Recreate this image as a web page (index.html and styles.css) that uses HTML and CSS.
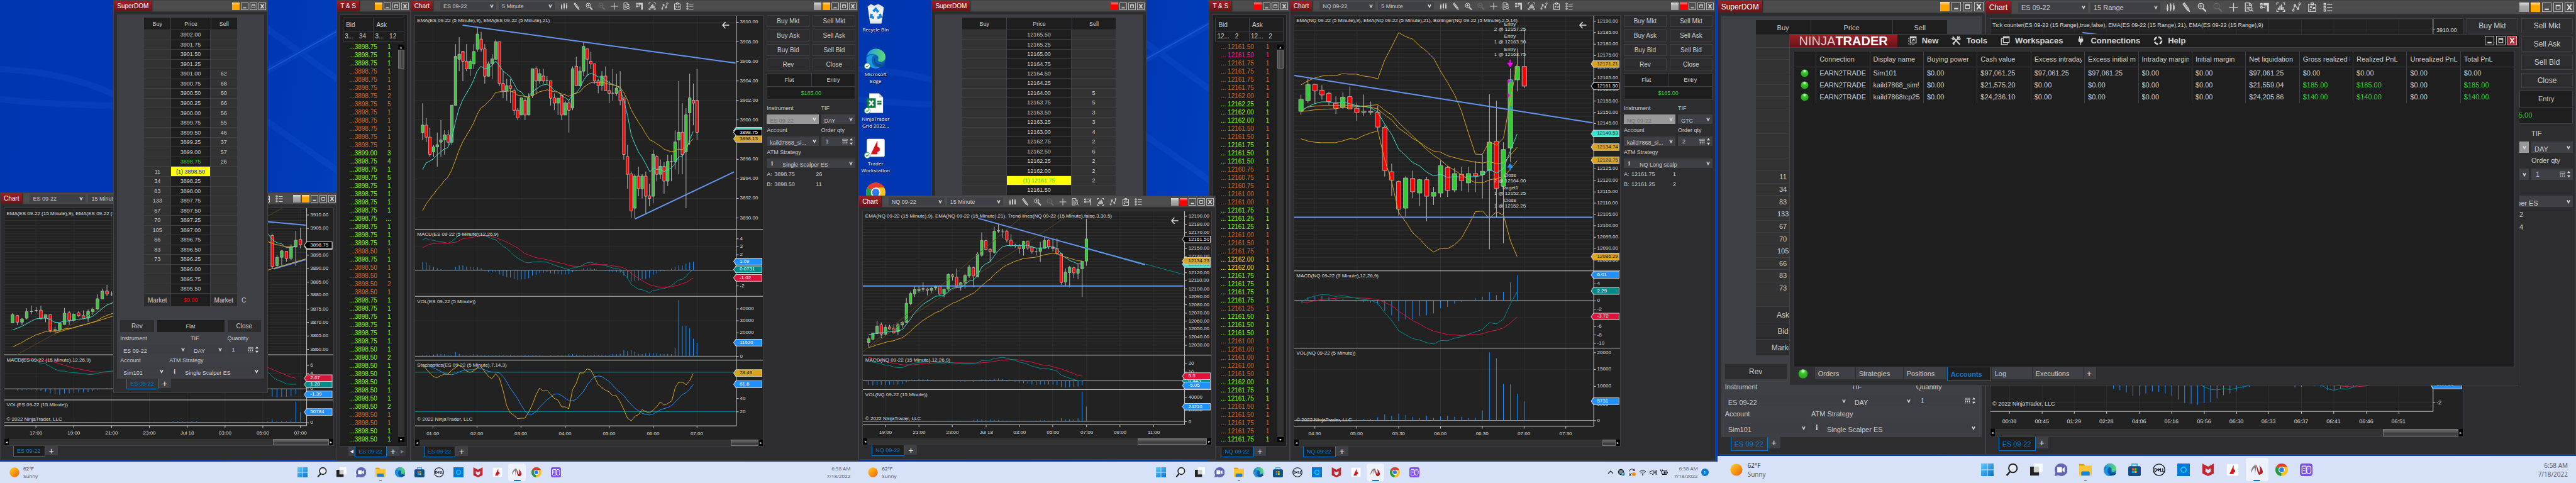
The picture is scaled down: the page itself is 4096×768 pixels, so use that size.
FILE: index.html
```
<!DOCTYPE html>
<html lang="en">
<head>
<meta charset="utf-8">
<title>Trading desktop</title>
<link rel="stylesheet" href="styles.css">
</head>
<body>
<svg class="defs" aria-hidden="true">
  <defs>
    <linearGradient id="g-win" x1="0" y1="0" x2="1" y2="1"><stop offset="0" stop-color="#5ad0fb"/><stop offset="1" stop-color="#0a6fd0"/></linearGradient>
    <linearGradient id="g-sun" x1="0" y1="0" x2="1" y2="1"><stop offset="0" stop-color="#ffd21c"/><stop offset="1" stop-color="#ee5f09"/></linearGradient>
    <linearGradient id="g-edge" x1="0" y1="0" x2="1" y2="0"><stop offset="0" stop-color="#1f9ae4"/><stop offset="1" stop-color="#5fdc6a"/></linearGradient>
    <radialGradient id="g-dot" cx=".5" cy=".2" r=".8"><stop offset="0" stop-color="#e8ffe0"/><stop offset=".35" stop-color="#3fc42f"/><stop offset="1" stop-color="#1da516"/></radialGradient>
  </defs>
  <symbol id="i-candles" viewBox="0 0 24 24"><path d="M4 5v17M12 2v20M20 2v19" stroke="currentColor" stroke-width="2"/><path d="M2 9h4v10H2zM10 5h4v13h-4zM18 7h4v11h-4z" fill="currentColor"/></symbol>
  <symbol id="i-pencil" viewBox="0 0 24 24"><path d="M3 4l4-3 11 15 2 7-6-4z" fill="currentColor" opacity=".55"/><path d="M3 4l4-3 11 15 2 7-6-4zM6 7l10 12" fill="none" stroke="currentColor" stroke-width="2"/></symbol>
  <symbol id="i-zoomin" viewBox="0 0 24 24"><g fill="none" stroke="currentColor" stroke-width="2"><circle cx="9" cy="9" r="7"/><path d="M9 5v8M5 9h8"/><path d="M14 15l8 8" stroke-width="4"/></g></symbol>
  <symbol id="i-zoomout" viewBox="0 0 24 24"><g fill="none" stroke="currentColor" stroke-width="2"><circle cx="9" cy="9" r="7"/><path d="M5 9h8"/><path d="M14 15l8 8" stroke-width="4"/></g></symbol>
  <symbol id="i-plus" viewBox="0 0 24 24"><path d="M12 1v22M1 12h22" stroke="currentColor" stroke-width="2"/></symbol>
  <symbol id="i-doc" viewBox="0 0 24 24"><g fill="none" stroke="currentColor" stroke-width="2"><path d="M11 22H2V1h11l5 5v5M12 1v6h6M5 8h4M5 12h6M5 16h5"/><circle cx="15" cy="16" r="4"/><path d="M18 19l4 4"/></g></symbol>
  <symbol id="i-panel" viewBox="0 0 24 24"><path d="M8 1h14v22h-5V7H8z" fill="currentColor"/><path d="M1 2h4v4H1zM1 10h4v4H1zM5 12h7V7" fill="none" stroke="currentColor" stroke-width="2"/></symbol>
  <symbol id="i-panel-line" viewBox="0 0 24 24"><path d="M1 2h4v4H1zM1 10h4v4H1zM5 3h17M5 12h17M20 1v22M16 7h6" fill="none" stroke="currentColor" stroke-width="2"/></symbol>
  <symbol id="i-bars" viewBox="0 0 24 24"><path d="M7 1H2v5M17 1h5v5M2 18v5h5M22 18v5h-5" fill="none" stroke="currentColor" stroke-width="2"/><path d="M6 19v-6M10 19V8M14 19V5M18 19v-8" stroke="currentColor" stroke-width="3"/></symbol>
  <symbol id="i-path" viewBox="0 0 24 24"><g fill="none" stroke="currentColor" stroke-width="2"><path d="M4 19L8 7l8 9 4-12"/><circle cx="4" cy="20" r="2"/><circle cx="8" cy="7" r="2"/><circle cx="16" cy="16" r="2"/><circle cx="20" cy="3" r="2"/></g></symbol>
  <symbol id="i-clip" viewBox="0 0 24 24"><path d="M3 4h18v19H3zM9 1h6v5H9zM7 10l4 4m0-4l-4 4M13 17l5-5m-4 0h4v4M7 20v-3h3" fill="none" stroke="currentColor" stroke-width="2"/></symbol>
  <symbol id="i-list" viewBox="0 0 24 24"><path d="M2 2h4v4H2zM2 10h4v4H2zM2 18h4v4H2zM10 5h13M10 12h13M10 21h13" fill="none" stroke="currentColor" stroke-width="2"/></symbol>
  <symbol id="i-min" viewBox="0 0 12 12"><path d="M3 9h6" stroke="#ddd" stroke-width="2"/></symbol>
  <symbol id="i-max" viewBox="0 0 12 12"><path d="M3 3h6v6H3zM3 4h6" fill="none" stroke="#ddd" stroke-width="1"/></symbol>
  <symbol id="i-close" viewBox="0 0 12 12"><path d="M3 2l6 8M9 2L3 10" stroke="#ddd" stroke-width="2"/></symbol>
  <symbol id="i-calc" viewBox="0 0 12 12"><path d="M1 1h10v3H1z" fill="none" stroke="#ccc" stroke-width="1"/><path d="M1 6h2M5 6h2M9 6h2M1 8h2M5 8h2M9 8h2M1 11h2M5 11h2M9 11h2" stroke="#ccc" stroke-width="1.4"/></symbol>
  <symbol id="i-spin" viewBox="0 0 8 14"><path d="M1 5l3-4 3 4zM1 9l3 4 3-4z" fill="#ddd"/></symbol>
  <symbol id="i-arrow" viewBox="0 0 24 24"><path d="M23 12H2M11 2L2 12l9 10" fill="none" stroke="#ddd" stroke-width="3"/></symbol>
  <symbol id="i-dot" viewBox="0 0 12 12"><circle cx="6" cy="6" r="5.5" fill="url(#g-dot)"/></symbol>
  <symbol id="n-new" viewBox="0 0 24 24"><path d="M7 2h15v16H7z" fill="none" stroke="currentColor" stroke-width="2"/><path d="M7 3h15v3H7z" fill="currentColor"/><path d="M3 6v16h14" fill="none" stroke="currentColor" stroke-width="2" stroke-dasharray="2 2"/><path d="M11 14l6-5m-4 0h4v4" fill="none" stroke="currentColor" stroke-width="2"/></symbol>
  <symbol id="n-tools" viewBox="0 0 24 24"><path d="M3 2l18 20M21 2L4 20" stroke="currentColor" stroke-width="3"/><path d="M1 5a4 4 0 0 0 6 3M17 1a5 5 0 0 0 0 7 5 5 0 0 0 6-1M3 18l4 4" fill="none" stroke="currentColor" stroke-width="3"/></symbol>
  <symbol id="n-work" viewBox="0 0 24 24"><path d="M7 2h15v15H7z" fill="none" stroke="currentColor" stroke-width="2"/><path d="M7 3h15v3H7z" fill="currentColor"/><path d="M6 7H2v15h15v-4" fill="none" stroke="currentColor" stroke-width="2"/></symbol>
  <symbol id="n-plug" viewBox="0 0 24 24"><path d="M9 1v7M15 1v7" stroke="currentColor" stroke-width="2"/><path d="M6 7h12v6l-4 4h-4l-4-4z" fill="currentColor"/><path d="M12 16v7" stroke="currentColor" stroke-width="2"/></symbol>
  <symbol id="n-help" viewBox="0 0 24 24"><circle cx="12" cy="12" r="9" fill="none" stroke="currentColor" stroke-width="4" stroke-dasharray="10 4"/></symbol>

  <symbol id="t-sun" viewBox="0 0 24 24"><circle cx="12" cy="12" r="11.5" fill="url(#g-sun)"/></symbol>
  <symbol id="t-start" viewBox="0 0 24 24"><path d="M0 0h11.4v11.4H0zM12.6 0H24v11.4H12.6zM0 12.6h11.4V24H0zM12.6 12.6H24V24H12.6z" fill="url(#g-win)"/></symbol>
  <symbol id="t-search" viewBox="0 0 24 24"><circle cx="14" cy="9" r="8" fill="#e8edf6" stroke="#222" stroke-width="2.4"/><path d="M9 15l-7 8" stroke="#222" stroke-width="3"/></symbol>
  <symbol id="t-task" viewBox="0 0 24 24"><path d="M0 6h17v17H0z" fill="#222"/><path d="M7 0h17v17H7z" fill="#fff" opacity=".78"/></symbol>
  <symbol id="t-chat" viewBox="0 0 24 24"><path d="M12 0a12 12 0 1 1-5 22.5L0 24l1.5-6.5A12 12 0 0 1 12 0z" fill="#6264b8"/><path d="M5 7h9v10H5zM15 10l4-3v10l-4-3z" fill="#fff"/></symbol>
  <symbol id="t-folder" viewBox="0 0 24 24"><path d="M0 1h9l3 4H0z" fill="#dd9a07"/><path d="M0 4h24v19H0z" fill="#fdc534"/><path d="M4 23v-6q0-2 2-2h12q2 0 2 2v6z" fill="#1683d8"/></symbol>
  <symbol id="t-edge" viewBox="0 0 24 24"><circle cx="12" cy="12" r="12" fill="#0c64b5"/><path d="M1 9C3 3 7 0 12 0c7 0 12 5 12 10 0 4-3 6-6 6-2 0-4-1-3-3 1-3-1-6-5-6-4-1-7 0-9 2z" fill="url(#g-edge)"/><path d="M10 8c-4 3-4 9 0 13 2 2 5 2 8 1-5 4-12 2-15-2-4-5-2-10 0-11 2-2 5-2 7-1z" fill="#1e95e0"/><path d="M12 9c-3 4 0 10 5 10 3 0 5-1 6-2l1 3-6 3c-8-1-10-10-6-14z" fill="#0b4f94"/></symbol>
  <symbol id="t-store" viewBox="0 0 24 24"><path d="M7 6V1h10v5" fill="none" stroke="#28b4ee" stroke-width="2"/><rect y="5" width="24" height="19" rx="3" fill="#124f85"/><path d="M7 9h4v4H7z" fill="#f35325"/><path d="M12 9h4v4h-4z" fill="#81bc06"/><path d="M7 14h4v4H7z" fill="#05a6f0"/><path d="M12 14h4v4h-4z" fill="#ffba08"/></symbol>
  <symbol id="t-dell" viewBox="0 0 24 24"><circle cx="12" cy="12" r="11" fill="none" stroke="#111" stroke-width="1.6"/><path d="M4 9v6h1q3-1 3-3t-3-3zM9 12l3-2.5M9 12l3 2.5M11 12.500l3-2M15 9v6h2M19 9v6h2" fill="none" stroke="#111" stroke-width="1.5"/></symbol>
  <symbol id="t-alexa" viewBox="0 0 24 24"><path d="M0 0h24v24H0z" fill="#0578d6"/><circle cx="12" cy="12" r="5" fill="none" stroke="#10d0ff" stroke-width="2"/></symbol>
  <symbol id="t-mcafee" viewBox="0 0 24 24"><path d="M1 0l11 6 11-6v19l-11 5-11-5zM7 9v7l5 3 5-3V9l-5 3z" fill="#c1272d" fill-rule="evenodd"/></symbol>
  <symbol id="t-ib" viewBox="0 0 24 24"><rect x="1" y="1" width="22" height="22" rx="2" fill="#fff"/><path d="M14 3L6 20h8v-6z" fill="#d5131f"/><circle cx="14" cy="14" r="3" fill="#d5131f"/></symbol>
  <symbol id="t-nt" viewBox="0 0 24 24"><path d="M0 18C1 8 5 3 11 3L8 20C8 14 8 10 7 8 4 10 3 14 0 18z" fill="#8a8078"/><path d="M11 3l5 14c2-3 2-8 0-13 4 3 6 7 7 12-1 4-4 6-8 5-3-5-4-11-4-18z" fill="#b3202a"/></symbol>
  <symbol id="t-chrome" viewBox="0 0 24 24"><circle cx="12" cy="12" r="12" fill="#fbc116"/><path d="M12 12L1.6 6A12 12 0 0 1 22.4 6H12z" fill="#e33b2e"/><path d="M12 12l-1 12A12 12 0 0 1 1.6 6z" fill="#229a49"/><circle cx="12" cy="12" r="6" fill="#fff"/><circle cx="12" cy="12" r="4.6" fill="#2f7de9"/></symbol>
  <symbol id="t-deck" viewBox="0 0 24 24"><rect width="24" height="24" rx="5" fill="#7a4df0"/><rect x="4" y="5" width="8" height="14" rx="1" fill="none" stroke="#fff" stroke-width="1.5"/><rect x="13" y="5" width="8" height="14" rx="4" fill="none" stroke="#fff" stroke-width="1.5"/><path d="M6 9h4M6 13h4M17 8v3" stroke="#fff" stroke-width="1.5" stroke-dasharray="1.5 1"/></symbol>
  <symbol id="t-bin" viewBox="0 0 24 24"><path d="M2 3l4-3 4 2 5-2 4 2 3 2-3 20H5z" fill="#dfe4ea"/><path d="M3 4h18l-2 17H5z" fill="#eff2f5"/><path d="M9 9l3-3 3 4M17 12l1 4-4 1M10 17l-4-1 1-4" fill="none" stroke="#1a84e0" stroke-width="3"/></symbol>
  <symbol id="t-excel" viewBox="0 0 24 24"><path d="M4 0h12l5 5v19H4z" fill="#fff"/><path d="M16 0l5 5h-5z" fill="#c8cfd4"/><path d="M1 6h11v12H1z" fill="#107c41"/><path d="M4 9l5 6M9 9l-5 6" stroke="#fff" stroke-width="2"/><path d="M14 10h5M14 13h5" stroke="#107c41" stroke-width="2"/></symbol>
  <symbol id="t-check" viewBox="0 0 24 24"><circle cx="12" cy="12" r="11" fill="#fff" stroke="#33a04a" stroke-width="2"/><path d="M7 12l4 4 7-8" fill="none" stroke="#2a9540" stroke-width="3"/></symbol>
  <symbol id="y-up" viewBox="0 0 24 24"><path d="M4 16l8-8 8 8" fill="none" stroke="#222" stroke-width="2.5"/></symbol>
  <symbol id="y-cloud" viewBox="0 0 24 24"><circle cx="11" cy="11" r="8" fill="#888" stroke="#222" stroke-width="3"/><circle cx="17" cy="17" r="6" fill="#1683d8"/><path d="M17 14v6M14 17h6" stroke="#fff" stroke-width="2"/></symbol>
  <symbol id="y-sync" viewBox="0 0 24 24"><path d="M3 9a9 9 0 0 1 16-4M20 1v6h-6M4 22l7-8M4 15v7h6" fill="none" stroke="#222" stroke-width="2"/><circle cx="18" cy="18" r="6" fill="#f7900f"/></symbol>
  <symbol id="y-wifi" viewBox="0 0 24 24"><path d="M2 10a14 14 0 0 1 20 0M5 14a9 9 0 0 1 14 0M9 17a5 5 0 0 1 6 0" fill="none" stroke="#222" stroke-width="2"/><circle cx="12" cy="20" r="2" fill="#222"/></symbol>
  <symbol id="y-sound" viewBox="0 0 24 24"><path d="M1 9h4l6-5v16l-6-5H1zM14 9q2 3 0 6M17 6q4 6 0 12M20 4q5 8 0 16" fill="none" stroke="#222" stroke-width="2"/></symbol>
  <symbol id="y-batt" viewBox="0 0 24 24"><path d="M8 6h12v13H6" fill="none" stroke="#222" stroke-width="2"/><path d="M11 9h6v8h-6zM21 10h3v5h-3z" fill="#222"/><path d="M1 3v5h6V3M4 8v8h5" fill="none" stroke="#222" stroke-width="2"/></symbol>
</svg>
<main class="desktop">
  <section class="monitor" aria-label="Display 1">
    <div class="workspace" id="ws1"></div>
    <footer class="taskbar" id="tb1"></footer>
  </section>
  <section class="monitor" aria-label="Display 2">
    <div class="workspace" id="ws2"></div>
    <footer class="taskbar" id="tb2"></footer>
  </section>
  <section class="monitor large" aria-label="Display 3">
    <div class="workspace" id="ws3"></div>
    <footer class="taskbar" id="tb3"></footer>
  </section>
</main>
<script src="app.js"></script>
</body>
</html>
```
FILE: styles.css
```
* { box-sizing: border-box; }
body {
  margin: 0;
  background: #0038b4;
  color: #ccc;
  font-family: "Liberation Sans", Arial, sans-serif;
  font-size: 9px;
  overflow: hidden;
}
button, input, select { font: inherit; color: inherit; margin: 0; border: 0; border-radius: 0; padding: 0; background: none; }
table { border-spacing: 0; border-collapse: collapse; }
th { font-weight: normal; }
.defs { position: absolute; width: 0; height: 0; }
.desktop { display: flex; height: 100vh; }
.monitor {
  --fs: 9px; --fs-lg: 10px; --fs-chart: 8px;
  --bar: 18px; --tool: 12px; --tool-gap: 8px; --ctl: 15px; --sel: 89px; --sel-h: 13px;
  --lab: 20px; --btn: 19px; --btn-gap: 5px; --box: 20px; --pad: 5px; --trade: 141px;
  --tab: 17px; --head: 20px; --market: 21px; --side: 43px; --above: 21px;
  --task: 34px; --ico: 16px; --ico-gap: 15px; --scroll: 11px; --tag: 12px; --qty-row: 16px;
  flex: 1 1 0; min-width: 0; display: flex; flex-direction: column;
  font-size: var(--fs);
}
.monitor.large {
  --fs: 11px; --fs-lg: 12px; --fs-chart: 9px;
  --bar: 22px; --tool: 15px; --tool-gap: 10px; --ctl: 18px; --sel: 111px; --sel-h: 16px;
  --lab: 25px; --btn: 24px; --btn-gap: 5px; --box: 25px; --pad: 6px; --trade: 169px;
  --tab: 22px; --head: 24px; --market: 26px; --side: 54px; --above: 13px;
  --task: 43px; --ico: 20px; --ico-gap: 19px; --scroll: 13px; --tag: 16px; --qty-row: 20px;
}
.workspace { position: relative; flex: 1; min-height: 0; overflow: hidden; background: linear-gradient(100deg, #0036b0 0%, #0037b2 30%, #0042c2 45%, #003cba 100%); }
.wall { position: absolute; inset: 0; width: 100%; height: 100%; }
.wall path { fill: none; stroke: #2c6cec; stroke-width: 2; opacity: .5; vector-effect: non-scaling-stroke; }
.wall .soft { stroke-width: 10; opacity: .15; }

/* windows */
.win { position: absolute; top: 0; bottom: 1px; display: flex; flex-direction: column; background: #2d2d30; border: 1px solid #3f3f46; overflow: hidden; }
.es15 { left: 0; width: 39.3%; top: 41.7%; bottom: 2px; }
.es-dom { left: 13.2%; width: 18%; height: 85.2%; bottom: auto; }
.es-ts { left: 39.2%; width: 8.6%; }
.es5 { left: 47.8%; right: 0; }
.nq-dom { left: 8.5%; width: 25%; height: 43%; bottom: auto; }
.nq-ts { left: 40.8%; width: 9.4%; }
.nq15 { left: 0; width: 41.6%; top: 42.4%; bottom: 3px; }
.nq5 { left: 50.2%; width: 49.6%; }
.rg-dom { left: 0; width: 31.2%; bottom: 2px; --bar: 20px; }
.rg-chart { left: 31.2%; right: 0; bottom: 2px; }
.nt { left: 8.35%; width: 85.05%; top: 7.4%; height: 77.2%; bottom: auto; background: #2f2f31; }

.titlebar { flex: none; height: var(--bar); display: flex; align-items: center; background: linear-gradient(#4b4b4b, #4e4e4e 60%, #484848); border-bottom: 1px solid #38383c; padding-right: 2px; }
.badge { align-self: stretch; display: flex; align-items: center; padding: 0 5px; font-size: var(--fs-lg); color: #fff; background: linear-gradient(#a01f25, #66141a); box-shadow: 1px 0 2px #222; white-space: nowrap; }
.chart-win .badge { margin-right: 12px; }
.titlebar .pick { width: var(--sel); height: var(--sel-h); margin-right: 4px; }
.tools { display: flex; gap: var(--tool-gap); margin-left: 5px; }
.tools button { width: var(--tool); height: var(--tool); display: block; color: #d0d0d0; }
.tools .off { color: #6a6a6a; }
.tools svg, .ctrls svg { display: block; width: 100%; height: 100%; }
.ctrls { margin-left: auto; display: flex; gap: 2px; }
.ctrls > * { width: var(--tool); height: var(--tool); display: block; }
.large .ctrls { gap: 3px; }
.ctrls button { border: 1px solid #b8b8b8; }
.sw-gray { background: linear-gradient(#ddd, #aaa 40%, #999); }
.sw-orange { background: linear-gradient(#ffe0a0, #ffa500 35%); }
.sw-red { background: linear-gradient(#ff9a90, #f00 35%); }

select { appearance: none; }
.pick {
  display: block; height: var(--ctl); min-width: 0; padding: 0 12px 0 5px; background-color: #3f3f46; color: #ccc;
  background-image: url("data:image/svg+xml,%3Csvg xmlns='http://www.w3.org/2000/svg' viewBox='0 0 10 10'%3E%3Cpath d='M2 2l3 6 3-6' fill='none' stroke='%23ddd' stroke-width='2'/%3E%3C/svg%3E");
  background-repeat: no-repeat; background-size: 8px 7px; background-position: right 3px center; text-overflow: ellipsis;
}
.pick:disabled { background-color: #999; color: #6e6e6e; opacity: 1; }
.info { padding-left: 25px; }
.with-info { position: relative; display: block; }
.with-info b { position: absolute; left: 7px; top: 0; line-height: var(--ctl); font-family: "Liberation Serif", serif; font-size: var(--fs-lg); color: #ddd; }
.with-info .pick { width: 100%; }
.qty { display: flex; align-items: center; height: var(--ctl); background: #3f3f46; padding: 0 3px 0 7px; }
.qty input { flex: 1; width: 0; min-width: 0; }
.qty svg { width: 9px; height: 10px; flex: none; }
.qty svg + svg { width: 7px; height: 12px; margin-left: 2px; }

/* chart windows */
.body { flex: 1; min-height: 0; display: flex; padding: var(--pad) 0 0 var(--pad); }
.plot-col { flex: 1; min-width: 0; display: flex; flex-direction: column; border: 1px solid #3f3f46; }
.solo { padding-right: var(--pad); }
.plot { flex: 1; min-height: 0; position: relative; background: #222; overflow: hidden; font-size: var(--fs-chart); line-height: 10px; color: #ddd; }
.plot > svg.draw { position: absolute; inset: 0; width: 100%; height: 100%; }
.draw * { vector-effect: non-scaling-stroke; }
.plot span { position: absolute; transform: translateY(-50%); white-space: nowrap; }
.plot .mid { transform: translate(-50%, -50%); }
.plot .tag { height: var(--tag); line-height: var(--tag); right: 1px; padding-left: 10px; color: #fff; background: #ccc; isolation: isolate; clip-path: polygon(4px 0, 100% 0, 100% 100%, 4px 100%, 0 50%); }
.plot .tag::before { content: ""; position: absolute; z-index: -1; inset: 1px; background: var(--c); clip-path: polygon(4px 0, 100% 0, 100% 100%, 4px 100%, 0 50%); }
.plot .dark { color: #111; }
.plot .back { position: absolute; width: var(--tool); height: var(--tool); transform: translate(-50%, -50%); }
.hscroll { flex: none; height: var(--scroll); display: flex; background: #333; border-top: 1px solid #222; }
.hscroll i, .vscroll i { flex: none; background: #000; color: #fff; font: 6px/8px "DejaVu Sans", sans-serif; display: flex; align-items: center; justify-content: center; }
.hscroll i { width: 7px; }
.thumb { margin-left: auto; background: linear-gradient(#6a6a6a, #4c4c4c 50%, #3c3c3c 55%, #444); border: 1px solid #777; }
.tabs { flex: none; display: flex; align-items: flex-start; padding: 0 0 5px 20px; }
.tab { height: var(--tab); padding: 0 6px 0 5px; border: 1px solid #0a78c8; border-top: 0; background: #1e1e1e; color: #0f7bc9; }
.es-dom .tab, .nq-dom .tab, .rg-dom .tab { background: #333338; }
.plus { width: var(--box); height: var(--ctl); max-width: 20px; background: #3f3f46; color: #eee; font-size: 14px; line-height: 14px; }
.nav { width: 10px; height: 15px; background: #3f3f46; color: #eee; font: 7px "DejaVu Sans", sans-serif; }
.nav.off { color: #777; background: #35353a; }

.trade { flex: none; width: var(--trade); margin: 0 4px 0 5px; display: flex; flex-direction: column; }
.grid2 { display: grid; grid-template-columns: 1fr 1fr; gap: 5px; }
.grid2 button { height: var(--btn); border: 1px solid #3f3f46; font-size: var(--fs-lg); }
.trade .grid2 { row-gap: 4px; }
.large .trade .grid2 { row-gap: 5px; }
.pos { display: grid; grid-template-columns: 1fr 1fr; margin: 4px 0 3px; background: #1e1e1e; border: 1px solid #3f3f46; text-align: center; line-height: var(--box); }
.pos b { font-weight: normal; }
.pos b + b { border-left: 1px solid #3f3f46; }
.pos output { grid-column: 1 / 3; color: #32cd32; border-top: 1px solid #3f3f46; }
.pair { display: grid; grid-template-columns: 3fr 2fr; column-gap: 4px; }
.fld { display: flex; flex-direction: column; min-width: 0; line-height: var(--lab); }
.quote { display: grid; grid-template-columns: 12px 66px 1fr; line-height: var(--qty-row); margin: 0; }
.quotes { margin-top: 2px; }

/* ladder */
.dom-panel { flex: 1; min-height: 0; margin: 4px 5px 0; background: #3f3f46; display: flex; flex-direction: column; padding: 5px 5px 4px; }
.large .dom-panel { padding: 7px 6px 6px; }
.ladder { flex: 1; min-height: 0; display: flex; flex-direction: column; margin: 0 calc(var(--side) - 5px); }
.ladder thead, .ladder tfoot { flex: none; display: block; }
.ladder tbody { flex: 1; min-height: 0; display: flex; flex-direction: column; }
.ladder tr { display: grid; grid-template-columns: 2fr 3fr 2fr; position: relative; }
.ladder tbody tr { flex: 1; min-height: 0; }
.ladder th, .ladder td { display: flex; align-items: center; justify-content: center; padding: 0; background: #333; border-bottom: 1px solid #3f3f46; white-space: nowrap; }
.ladder td:nth-child(2) { background: #1e1e1e; border-left: 1px solid #3f3f46; border-right: 1px solid #3f3f46; }
.ladder thead th { background: #1e1e1e; height: var(--head); }
.ladder thead th + th { border-left: 1px solid #3f3f46; }
.ladder tfoot td { height: var(--market); background: #2d2d30; font-size: var(--fs-lg); }
.ladder td.hit:nth-child(2) { background: #ff0; color: #00f; }
.ladder td.nq:nth-child(2) { color: #32cd32; }
.ladder .up { color: #32cd32; }
.ladder td.loss { color: #f00; font-size: var(--fs); }
.ladder tfoot .center { position: absolute; left: 100%; margin-left: 7px; background: none; border: 0; }
.acts { display: flex; gap: 5px; margin-top: var(--above); }
.acts button { height: var(--btn); background: #2d2d30; font-size: var(--fs-lg); }
.acts > :nth-child(1), .acts > :nth-child(3) { flex: 1; }
.acts .flat { flex: 2; background: #1e1e1e; font-size: var(--fs); }
.row3 { display: grid; grid-template-columns: 2fr 1fr 1fr; column-gap: 5px; }
.row2 { display: grid; grid-template-columns: 1fr 2fr; column-gap: 5px; }
.dom-panel .pick, .dom-panel .qty { background-color: #3d3d44; }

/* time and sales */
.ts-panel { flex: 1; min-height: 0; margin: 4px 4px 0; border: 1px solid #3f3f46; background: #1e1e1e; display: flex; flex-direction: column; padding: 4px; }
.ts-top { width: 100%; table-layout: fixed; }
.ts-top th, .ts-top td { border: 1px solid #3f3f46; text-align: left; padding: 0 4px; font-size: var(--fs-lg); white-space: nowrap; }
.ts-top th { height: 21px; }
.ts-top td { height: 16px; padding: 0 2px; }
.ts-top td span { margin-left: 6px; }
.ts-mid { flex: 1; min-height: 0; display: flex; margin-top: 3px; }
.tape { flex: 1; display: flex; flex-direction: column; font-size: 10px; }
.tape tbody { flex: 1; min-height: 0; display: flex; flex-direction: column; }
.tape tr { flex: 1; min-height: 0; display: grid; grid-template-columns: 5fr 2fr 1fr; align-items: center; }
.tape td { padding: 0; text-align: right; white-space: nowrap; line-height: 12px; }
.g { color: #7cfc00; } .o { color: #d2691e; } .p { color: #ff1493; } .y { color: #ffd700; }
.vscroll { width: 10px; background: #333; display: flex; flex-direction: column; margin: 2px 0; }
.vscroll i { height: 8px; }
.vscroll b { height: 30px; background: linear-gradient(90deg, #444, #666 40%, #3c3c3c 50%, #555); border: 1px solid #777; }
.vscroll i:last-child { margin-top: auto; }
.es-ts .tabs, .nq-ts .tabs { padding-left: 18px; }

/* control centre */
.nt-bar { flex: none; height: 21px; background: #1e1e1e; display: flex; align-items: center; gap: 21px; border-bottom: 1px solid #3f3f46; padding-right: 3px; }
.logo { align-self: stretch; display: flex; align-items: center; padding: 0 6px; width: 171px; justify-content: center; background: linear-gradient(#a01f25, #66141a); color: #d8c8c8; font-size: 20px; line-height: 20px; margin-right: -5px; }
.logo b { color: #fff; }
.nt-bar .menu { display: flex; align-items: center; gap: 8px; font-size: 13px; font-weight: bold; color: #d5d5d5; }
.menu svg { width: 15px; height: 15px; }
.nt-bar .ctrls .x { background: #b9242c; }
.nt-main { flex: 1; min-height: 0; margin: 5px 6px 0; background: #1e1e1e; border: 1px solid #3f3f46; border-top-color: #333; }
.accounts { width: 100%; table-layout: fixed; }
.accounts th, .accounts td { text-align: left; font-size: 11px; padding: 0 4px 0 5px; white-space: nowrap; border-right: 1px solid #3f3f46; }
.accounts th span, .accounts td span { display: block; overflow: hidden; }
.accounts th:last-child, .accounts td:last-child { border-right: 0; }
.accounts th { height: 25px; border-bottom: 1px solid #3f3f46; }
.accounts td { height: 19px; }
.accounts .st { width: 35px; text-align: center; padding: 0; }
.accounts td svg { width: 13px; height: 13px; display: block; margin: auto; }
.accounts .up { color: #32cd32; }
.nt-tabs { flex: none; display: flex; align-items: flex-start; padding: 0 0 6px 13px; height: 28px; }
.nt-tabs svg { width: 16px; height: 17px; margin: 2px 11px 0 0; }
.nt-tabs button { height: 19px; padding: 0 5px; text-align: left; background: #3f3f46; margin-right: 1px; }
.nt-tabs .on { height: 22px; background: #1e1e1e; border: 1px solid #0a78c8; border-top: 0; color: #0f7bc9; font-weight: bold; }
.w64 { width: 64px; } .w70 { width: 70px; } .w68 { width: 68px; } .w75 { width: 75px; } .w80 { width: 80px; }

/* desktop shortcuts */
.shortcuts { position: absolute; left: 0; top: 6px; width: 54px; display: flex; flex-direction: column; font: 8px/11px "Open Sans", "Noto Sans", sans-serif; color: #fff; }
.shortcuts a { height: 71px; display: flex; flex-direction: column; align-items: center; text-align: center; color: inherit; text-decoration: none; text-shadow: 1px 1px 1px #000; position: relative; }
.shortcuts svg { width: 31px; height: 32px; margin-bottom: 3px; flex: none; }
.shortcuts svg.chk { position: absolute; left: 9px; top: 23px; width: 10px; height: 10px; }

/* taskbar */
.taskbar { flex: none; height: var(--task); background: #d7e1f8; display: grid; grid-template-columns: 1fr auto 1fr; align-items: center; color: #222; font: 8px/12px "Open Sans", "Noto Sans", sans-serif; }
.large .taskbar { font: 10px/14px "Open Sans", "Noto Sans", sans-serif; }
.weather { display: flex; align-items: center; gap: 6px; padding-left: 15px; }
.large .weather { padding-left: 20px; gap: 8px; }
.weather svg { width: var(--ico); height: var(--ico); flex: none; }
.weather small, .clock { font-size: inherit; color: #555; }
.weather small { display: block; }
.apps { display: flex; gap: 3px; }
.apps button { width: calc(var(--ico) + var(--ico-gap) - 3px); height: calc(var(--task) - 6px); border-radius: 4px; display: flex; align-items: center; justify-content: center; position: relative; }
.apps svg { width: var(--ico); height: var(--ico); }
.apps .on { background: #eef2fc; }
.apps .on::after, .apps .run::after { content: ""; position: absolute; bottom: 0; width: 11px; height: 2px; border-radius: 1px; background: #0a70d0; }
.apps .run::after { width: 4px; background: #888; }
.tray { display: flex; justify-content: flex-end; align-items: center; gap: 5px; padding-right: 13px; }
.tray svg { width: 12px; height: 12px; }
.clock { text-align: right; margin-left: 5px; }
.count { width: 12px; height: 12px; border-radius: 6px; background: #0a78d6; color: #fff; text-align: center; }
.has-count { padding-right: 14px; }
```
FILE: app.js
```
const use = (id, cls = '') => `<svg class="${cls}" aria-hidden="true"><use href="#${id}"/></svg>`;
const pick = (label, text, extra = '', cls = '') => `<select class="pick ${cls}" aria-label="${label}" ${extra}><option>${text}</option></select>`;
const qty = (label, v) => `<span class="qty"><input type="text" aria-label="${label}" value="${v}">${use('i-calc')}${use('i-spin')}</span>`;
const CORN = '#6495ed', GOLD = '#daa520', AQUA = '#40e0d0', TEAL = '#008b8b', RED = '#dc143c', BLUE = '#1e90ff', DIM = '#5a4520';

const controls = (swatches) => `<div class="ctrls">${swatches.map(s => `<span class="sw-${s}"></span>`).join('')}
  <button aria-label="Minimize">${use('i-min')}</button><button aria-label="Maximize">${use('i-max')}</button><button class="x" aria-label="Close">${use('i-close')}</button></div>`;

const tabs = (name, nav) => `<nav class="tabs">${nav ? '<button class="nav" aria-label="Previous">◀</button>' : ''}<button class="tab">${name}</button><button class="plus" aria-label="Add tab">+</button>${nav ? '<button class="nav off" aria-label="Next">▶</button>' : ''}</nav>`;

/* ---------- charts ---------- */
function plot(c) {
  const [bx, by, bw, bh] = c.box;
  const px = x => ((x - bx) / bw * 100).toFixed(2) + '%';
  const py = y => ((y - by) / bh * 100).toFixed(2) + '%';
  const seg = (x1, y1, x2, y2, col, w = 1) => `<path d="M${x1} ${y1}L${x2} ${y2}" stroke="${col}" stroke-width="${w}" fill="none"/>`;
  let s = '', h = '';
  (c.gridH || []).forEach(y => s += seg(bx, y, c.axis, y, '#303032'));
  c.times.forEach(t => s += seg(t[0], by, t[0], c.floor - 10, '#2f2f31'));
  (c.levels || []).forEach(l => s += seg(bx, l[0], c.axis, l[0], l[1]));
  (c.seps || []).forEach(y => s += seg(bx, y, bx + bw, y, '#ccc'));
  s += seg(bx, c.floor, c.axis, c.floor, '#ccc') + seg(c.axis, by, c.axis, c.floor, '#ccc');
  (c.bars || []).forEach(b => b.v.forEach((v, i) => { if (v) s += seg(b.x + i * b.s, b.y, b.x + i * b.s, b.y - v, BLUE); }));
  (c.candles || []).forEach(g => g.v.trim().split(/\s+/).forEach((k, i) => {
    const p = k.split(','), x = g.x + i * g.s, w = g.w;
    const [t, b, hi, lo] = p.map(Number);
    s += seg(x, hi, x, lo, '#b8b8b8');
    if (p[4] === 'D') s += seg(x - w / 2, t, x + w / 2, t, '#ccc');
    else s += `<rect x="${x - w / 2}" y="${t}" width="${w}" height="${b - t}" fill="${p[4] === 'G' ? '#32cd32' : '#f00'}" stroke="#aaa"/>`;
  }));
  (c.lines || []).forEach(l => s += `<polyline points="${l[1]}" ${l[3] ? `transform="translate(0 ${l[3]})"` : ''} fill="none" stroke="${l[0]}" stroke-width="${l[2] || 1}"/>`);
  s += c.extra || '';
  c.labels.forEach(l => { s += seg(c.axis, l[0], c.axis + 8, l[0], '#ccc'); h += `<span style="left:${px(c.axis + 13)};top:${py(l[0])}">${l[1]}</span>`; });
  c.times.forEach(t => { s += seg(t[0], c.floor, t[0], c.floor + 15, '#ccc'); h += `<span class="mid" style="left:${px(t[0])};top:${py(c.timeY)}">${t[1]}</span>`; });
  c.titles.forEach(t => h += `<span style="left:${px(bx + 8)};top:${py(t[0])}">${t[1]}</span>`);
  (c.notes || []).forEach(t => h += `<span class="mid" style="left:${px(t[0])};top:${py(t[1])}">${t[2]}</span>`);
  c.tags.forEach(t => h += `<span class="tag ${t[3] || ''}" style="left:${px(c.axis - 10)};top:${py(t[0])};--c:${t[2]}">${t[1]}</span>`);
  if (c.back) h += `<svg class="back" style="left:${px(c.back[0])};top:${py(c.back[1])}"><use href="#i-arrow"/></svg>`;
  return `<div class="plot"><svg class="draw" viewBox="${bx} ${by} ${bw} ${bh}" preserveAspectRatio="none">${s}</svg>${h}</div>`;
}

const range = (a, b, s) => { const r = []; for (let v = a; v <= b; v += s) r.push(v); return r; };

const es5 = {
  box: [40, 92, 1203, 2771], axis: 1150, floor: 2777, timeY: 2828, seps: [1491, 1929, 2347], back: [1114, 154],
  gridH: [135, 263, 391, 519, 647, 774, 904, 1032, 1160, 1288, 1416, 1604, 1909, 2089],
  levels: [[1758, '#aaa'], [2321, '#aaa'], [2426, TEAL], [2684, TEAL]],
  times: [[102, '01:00'], [254, '02:00'], [406, '03:00'], [559, '04:00'], [711, '05:00'], [863, '06:00'], [1014, '07:00']],
  titles: [[125, 'EMA(ES 09-22 (5 Minute),9), EMA(ES 09-22 (5 Minute),21)'], [1525, 'MACD(ES 09-22 (5 Minute),12,26,9)'], [1964, 'VOL(ES 09-22 (5 Minute))'], [2381, 'Stochastics(ES 09-22 (5 Minute),7,14,3)'], [2735, '© 2022 NinjaTrader, LLC']],
  labels: [[135, '3910.00'], [263, '3908.00'], [391, '3906.00'], [519, '3904.00'], [647, '3902.00'], [774, '3900.00'], [1032, '3896.00'], [1160, '3894.00'], [1288, '3892.00'], [1416, '3890.00'], [1553, '4'], [1605, '3'], [1657, '2'], [1861, '-2'], [2011, '40000'], [2089, '30000'], [2168, '20000'], [2246, '10000'], [2322, '0'], [2598, '40'], [2685, '20']],
  tags: [[846, '', AQUA], [898, '3898.13', GOLD, 'dark'], [856, '3898.75', '#000'], [1701, '1.09', BLUE], [1753, '0.0731', TEAL], [1808, '-1.02', RED], [2232, '11620', BLUE], [2432, '78.49', GOLD, 'dark'], [2505, '61.6', BLUE]],
  candles: [{ x: 66, s: 12.64, w: 9, v: `808,856,665,906,G 808,887,762,920,R 887,1000,825,1016,R 951,984,938,1016,G 936,951,857,1080,G 905,920,775,1016,G 872,906,842,1002,G 872,920,842,938,R 678,920,678,938,G 358,678,278,678,G 344,377,232,455,G 325,391,325,520,R 390,440,278,455,R 390,440,377,488,G 326,408,278,440,G 212,311,165,327,G 245,311,198,328,R 309,488,278,536,R 408,488,391,488,G 375,408,344,505,G 262,377,247,377,G 262,536,262,552,R 535,584,455,632,R 550,584,505,648,G 550,568,505,664,R 582,711,568,742,R 710,761,697,775,R 630,742,630,742,G 646,742,630,775,R 630,742,600,742,G 439,615,439,630,G 439,519,424,600,R 471,519,440,536,G 487,519,440,536,R 518,520,488,536,D 518,632,518,680,R 630,664,600,711,R 632,664,632,742,G 613,742,600,775,R 663,742,648,742,G 663,711,648,857,R 439,696,424,711,G 423,550,360,550,R 455,552,424,552,G 293,455,262,488,G 309,377,309,488,R 390,408,328,440,R 407,519,407,536,R 518,550,505,600,R 487,550,455,584,G 487,584,424,584,R 582,600,519,664,R 599,601,440,648,D 566,600,472,616,G 582,648,455,678,R 630,1000,630,1034,R 1014,1130,938,1225,R 1128,1370,1112,1417,R 1142,1352,1130,1417,G 1142,1224,1080,1274,R 1142,1224,1130,1288,G 1142,1274,1112,1385,R 1272,1288,1192,1338,R 999,1274,970,1320,G 1014,1130,1002,1176,R 1078,1130,1034,1160,G 1078,1175,1050,1257,R 1046,1175,1002,1208,G 1046,1048,1002,1176,D 918,1048,842,1098,G 855,906,520,1130,G 855,1001,665,1130,R 741,984,697,1352,G 630,728,472,938,G 646,664,536,810,R 646,856,440,906,R` }],
  bars: [
    { x: 66, s: 12.64, y: 1758, v: [54, 49, 33, 22, 13, 7, 4, 0, 4, 22, 31, 31, 24, 22, 20, 19, 13, -4, -13, -14, -14, -28, -38, -45, -47, -57, -63, -60, -59, -53, -36, -31, -21, -17, -14, -21, -24, -25, -29, -28, -27, -12, -5, 1, 13, 16, 14, 7, 2, 1, -5, -12, -12, -12, -16, -35, -54, -74, -70, -68, -60, -57, -50, -30, -21, -8, -6, 0, 10, 23, 31, 31, 42, 51, 56] },
    { x: 66, s: 12.64, y: 2321, v: [8, 10, 8, 11, 15, 15, 14, 8, 8, 27, 14, 5, 5, 5, 14, 10, 5, 8, 5, 5, 5, 8, 8, 5, 8, 5, 5, 5, 10, 5, 5, 5, 5, 2, 2, 5, 2, 5, 5, 5, 14, 14, 10, 5, 8, 10, 5, 8, 10, 10, 8, 8, 16, 13, 16, 40, 33, 40, 30, 15, 13, 18, 18, 21, 18, 15, 15, 15, 14, 53, 367, 198, 198, 184, 114, 88] }],
  lines: [
    [AQUA, '66,1098 78,1056 90,1045 102,1030 115,1005 128,985 140,965 153,955 166,905 179,790 191,705 204,645 216,605 229,565 242,515 254,455 267,423 280,438 293,434 305,420 318,389 331,418 343,452 356,473 368,490 381,535 394,580 406,590 419,620 431,624 445,588 457,575 470,555 482,545 497,541 508,555 520,580 533,592 546,615 559,628 571,648 584,608 597,596 609,568 622,515 634,482 647,469 660,478 672,492 684,493 697,515 710,528 723,543 735,548 748,570 761,645 774,745 787,875 800,935 812,985 824,1018 837,1062 851,1114 863,1092 875,1098 887,1096 900,1112 912,1102 925,1090 938,1060 950,1018 963,1012 977,970 989,900 1001,849'],
    [GOLD, '66,1368 78,1325 90,1295 102,1265 115,1232 128,1205 140,1175 153,1150 166,1105 179,1040 191,975 204,920 216,880 229,840 242,795 254,740 267,697 280,680 293,655 305,632 318,595 331,590 343,589 356,588 368,584 381,592 394,612 406,614 419,622 431,626 445,612 457,604 470,590 482,584 497,577 508,584 520,589 533,592 546,604 559,610 571,620 584,605 597,600 609,590 622,562 634,545 647,531 660,531 672,530 684,528 697,533 710,540 723,545 735,550 748,559 761,595 774,645 787,710 800,752 812,790 824,822 837,865 851,905 863,915 875,930 887,945 900,965 912,975 925,981 938,978 950,965 963,969 977,950 989,922 1001,898'],
    [CORN, '204,154 1147,402', 2], [CORN, '800,1422 1142,1115', 2],
    [TEAL, '66,1557 78,1550 90,1560 102,1562 115,1568 140,1575 153,1582 166,1570 179,1550 191,1530 204,1520 216,1523 229,1522 254,1515 280,1530 305,1552 318,1558 331,1580 345,1603 356,1615 368,1635 381,1660 394,1678 406,1692 419,1705 431,1710 445,1705 470,1702 497,1706 508,1715 520,1724 546,1740 571,1754 584,1743 597,1742 609,1735 622,1720 634,1710 647,1706 660,1712 672,1720 697,1728 710,1735 723,1744 735,1746 748,1752 761,1780 774,1810 787,1850 800,1868 812,1883 824,1885 850,1905 863,1890 875,1888 887,1880 900,1879 925,1860 938,1840 950,1823 963,1818 977,1798 989,1770 1001,1755'],
    [RED, '66,1612 78,1598 90,1588 102,1585 128,1580 160,1580 180,1575 191,1566 204,1553 240,1542 267,1532 290,1533 318,1545 345,1564 368,1585 394,1612 419,1648 431,1658 457,1675 482,1684 508,1695 533,1707 559,1718 571,1727 590,1732 610,1733 622,1730 640,1723 660,1721 705,1722 723,1730 748,1736 761,1744 774,1758 787,1778 800,1798 824,1825 837,1840 850,1853 875,1866 890,1869 925,1867 950,1855 977,1838 1001,1809'],
    [BLUE, '66,823 85,818 102,828 115,840 140,863 153,872 166,874 179,869 191,857 204,848 216,843 240,841 254,836 267,833 280,842 293,852 305,856 318,857 331,862 345,887 356,920 368,960 394,1030 406,1072 419,1110 431,1132 445,1132 457,1118 470,1088 495,1040 520,1003 533,999 546,1010 559,1028 571,1045 584,1044 597,1035 609,1010 622,982 634,945 647,912 660,886 672,883 684,885 697,902 710,918 737,972 750,992 763,1015 774,1044 800,1095 812,1110 824,1126 837,1134 850,1138 863,1131 875,1118 887,1104 900,1096 912,1090 927,1076 950,1030 963,1005 977,990 989,968 1001,938', 1, 1568],
    [GOLD, '66,808 78,835 90,862 102,885 115,894 128,881 140,871 153,872 166,845 179,830 191,808 204,826 216,848 229,859 242,850 254,828 267,822 280,852 293,885 305,900 318,868 331,895 345,985 356,1075 368,1122 381,1140 394,1163 406,1159 419,1159 431,1125 445,1070 457,1010 470,962 482,981 497,979 508,1001 520,1028 533,1040 547,1085 559,1085 571,1098 584,972 597,930 609,862 622,863 634,836 647,843 660,890 673,940 697,975 710,986 723,1012 735,1011 748,1050 763,1110 774,1160 787,1176 800,1146 812,1135 824,1103 837,1116 850,1124 863,1105 875,1083 887,1052 900,1073 912,1064 927,1045 939,957 950,924 963,923 977,940 989,912 1001,866', 1, 1568]]
};

const es15 = {
  box: [12, -222, 1208, 1512], axis: 1123, floor: 1207, timeY: 1258, seps: [741, 1038],
  gridH: range(-212, 730, 17.6).concat([863, 1014]), levels: [[965, '#aaa'], [1186, '#aaa']],
  times: [[128, '17:00'], [267, '19:00'], [406, '21:00'], [545, '23:00'], [684, 'Jul 18'], [823, '03:00'], [962, '05:00'], [1100, '07:00']],
  titles: [[-187, 'EMA(ES 09-22 (15 Minute),9), EMA(ES 09-22 (15 Minute),21)'], [777, 'MACD(ES 09-22 (15 Minute),12,26,9)'], [1073, 'VOL(ES 09-22 (15 Minute))'], [1165, '© 2022 NinjaTrader, LLC']],
  labels: [[-177, '3910.00'], [-89, '3905.00'], [87, '3895.00'], [175, '3890.00'], [264, '3885.00'], [350, '3880.00'], [441, '3875.00'], [528, '3870.00'], [618, '3865.00'], [706, '3860.00'], [811, '6'], [863, '4'], [965, '0'], [1188, '0']],
  tags: [[27, '', GOLD], [21, '3898.75', '#000'], [936, '1.28', TEAL], [895, '2.67', RED], [1002, '-1.39', BLUE], [1118, '50784', BLUE]],
  candles: [
    { x: 42, s: 17.35, w: 10, v: `478,532,467,532,G 484,527,480,546,R 506,527,500,546,G 458,501,436,508,G 457,458,418,475,D 450,451,428,462,D 448,501,418,511,R 478,501,478,527,G 478,583,478,594,R 576,583,556,603,G 535,576,532,576,G 468,542,433,542,G 466,515,454,545,R 474,515,466,525,G 466,484,454,494,R 484,501,450,508,R 457,501,444,525,G 442,457,432,478,G 373,439,344,448,G 323,374,306,374,G 323,341,282,356,R 342,343,325,357,D` },
    { x: 997, s: 17.2, w: 10, v: `-43,161,-50,176,R 101,155,85,165,G 59,101,52,155,G 62,109,62,130,R 35,108,16,118,G -11,33,-73,157,G -16,18,-93,42,R` }],
  bars: [
    { x: 42, s: 17.35, y: 965, v: [-4, -10, -10, -6, -6, -10, -15, -18, -30, -37, -40, -30, -30, -26, -24, -24, -20, -16, -8, 1, 5, 4] },
    { x: 910, s: 17.3, y: 965, v: [-24, -15, -25, -28, -25, -50, -56, -52, -52, -46, -36] },
    { x: 42, s: 17.35, y: 1186, v: [2, 0, 0, 2, 0, 2, 0, 0, 2, 0, 2, 0, 0, 2, 0, 2, 0, 0, 2, 2, 2, 0, 0, 0, 0, 0, 0, 0, 2, 2, 5, 2, 2, 5, 7, 7, 7, 6, 7, 7, 4, 2, 2, 2, 2, 2, 5, 2, 2, 2, 5, 4, 4, 5, 7, 19, 10, 10, 10, 14, 138, 68] }],
  lines: [
    [DIM, '58,740 413,392'], [DIM, '980,-170 1033,-222'],
    [AQUA, '42,577 58,568 75,555 109,522 128,505 144,503 165,499 180,510 197,527 214,530 233,519 249,520 267,513 283,507 301,505 319,499 335,490 353,465 388,415 413,398'],
    [AQUA, '980,-55 997,-15 1014,5 1031,12 1048,37 1066,37 1083,30'],
    [GOLD, '42,690 75,662 92,643 109,628 128,610 144,602 162,589 197,586 214,582 233,571 260,566 283,553 319,537 350,520 370,497 388,483 413,467'],
    [GOLD, '197,600 233,580 350,522 413,486'], [GOLD, '980,-2 1000,12 1031,25 1048,31 1085,28'],
    [CORN, '980,-133 1119,-110', 2], [CORN, '1003,177 1119,116', 2], [GOLD, '980,185 1119,111'],
    [RED, '42,763 100,768 180,778 197,790 233,810 267,828 301,840 335,852 370,857 413,852'], [RED, '980,824 1014,850 1048,875 1066,888 1083,895'],
    [TEAL, '42,768 70,768 130,785 144,795 162,800 197,835 214,848 233,848 249,856 283,861 319,870 335,870 353,865 370,855 406,848 413,848'],
    [TEAL, '980,853 997,885 1014,907 1031,917 1048,932 1066,935 1085,935']]
};

const nq15 = {
  box: [45, -204, 1255, 1491], axis: 1204, floor: 1203, timeY: 1255, seps: [744, 971], back: [1167, -142],
  gridH: range(-192, 735, 21.2), levels: [[913, '#aaa'], [1180, '#aaa']],
  times: [[126, '19:00'], [247, '21:00'], [367, '23:00'], [489, 'Jul 18'], [609, '03:00'], [729, '05:00'], [851, '07:00'], [971, '09:00'], [1092, '11:00']],
  titles: [[-171, 'EMA(NQ 09-22 (15 Minute),9), EMA(NQ 09-22 (15 Minute),21), Trend lines(NQ 09-22 (15 Minute),false,3,30,5)'], [778, 'MACD(NQ 09-22 (15 Minute),12,26,9)'], [1005, 'VOL(NQ 09-22 (15 Minute))'], [1161, '© 2022 NinjaTrader, LLC']],
  labels: [[-171, '12190.00'], [-118, '12180.00'], [-64, '12170.00'], [41, '12150.00'], [94, '12140.00'], [201, '12120.00'], [252, '12110.00'], [307, '12100.00'], [360, '12090.00'], [412, '12080.00'], [467, '12070.00'], [519, '12060.00'], [571, '12050.00'], [624, '12040.00'], [679, '12030.00'], [798, '20'], [855, '10'], [1022, '40000'], [1105, '20000'], [1182, '0']],
  tags: [[-20, '12161.50', '#000'], [142, '12131.63', AQUA, 'dark'], [121, '12134.73', GOLD, 'dark'], [912, '0.443', TEAL], [882, '5.5', RED], [943, '-5.05', BLUE], [1082, '24210', BLUE]],
  candles: [{ x: 66, s: 15.08, w: 9, v: `636,660,620,688,G 598,640,598,640,G 552,602,517,606,G 543,605,528,630,R 560,605,543,616,G 558,571,543,580,R 567,597,540,603,R 543,590,534,610,G 527,545,520,565,G 402,527,366,533,G 338,403,325,415,G 312,341,290,360,G 309,318,290,333,G 305,310,264,325,G 309,316,300,350,R 303,316,295,333,G 290,301,283,318,G 290,342,283,350,R 309,341,305,362,G 212,309,203,325,G 215,227,208,252,R 230,290,173,296,R 267,291,260,318,G 219,268,208,305,G 164,222,150,235,G 166,222,160,296,R 79,228,66,228,G -12,86,-65,95,G -12,48,-14,52,R 46,62,40,130,R -73,66,-102,75,G -78,-73,-120,-62,G -74,-73,-88,-30,D -73,-14,-80,0,R -14,22,-52,30,R 20,21,10,35,D 22,42,12,75,R -6,42,-10,88,G -8,38,-10,50,R 30,62,25,75,R 62,63,40,88,D 38,60,-2,130,G -12,40,-35,42,G -14,31,-20,45,R 30,42,-20,60,R 40,74,-25,85,R 76,265,70,280,R 197,262,172,285,G 164,200,158,296,G 168,202,160,237,R 178,204,142,243,G 126,176,126,360,G -22,124,-155,155,G` }],
  bars: [
    { x: 66, s: 15.08, y: 913, v: [-27, -30, -27, -27, -27, -26, -26, -24, -21, -9, 1, 6, 10, 9, 9, 6, 3, 0, -3, 1, 1, -4, -5, -6, -3, -6, 2, 9, 9, 7, 12, 16, 11, 6, 0, -5, -12, -15, -18, -24, -27, -25, -25, -24, -25, -28, -41, -45, -41, -41, -38, -30] },
    { x: 66, s: 15.08, y: 1180, v: [2, 2, 4, 2, 2, 2, 2, 2, 2, 7, 3, 6, 2, 2, 2, 2, 2, 2, 2, 4, 4, 4, 4, 4, 4, 9, 13, 13, 8, 13, 10, 8, 5, 4, 4, 4, 4, 4, 4, 4, 5, 8, 8, 5, 4, 7, 21, 13, 13, 13, 20, 196, 98] }],
  lines: [
    [DIM, '45,722 510,0 641,-204'], [DIM, '80,680 220,485 610,35 808,-204'],
    [TEAL, '775,0 1200,212'], [CORN, '460,-158 1062,148', 2], [CORN, '45,288 1200,288', 2],
    [AQUA, '66,607 80,605 96,597 125,596 140,587 165,588 188,575 200,545 215,510 231,465 262,408 307,356 337,350 352,325 368,302 398,298 413,278 428,256 443,248 458,218 473,165 488,140 503,130 518,90 533,55 548,30 563,22 600,22 640,20 655,32 670,38 700,37 715,28 740,38 755,65 765,90 790,120 820,142 835,144'],
    [GOLD, '66,693 80,687 96,675 112,668 140,652 155,649 188,628 215,590 231,560 260,517 307,463 323,453 340,432 368,402 383,392 398,377 443,336 458,314 488,262 503,244 518,213 548,167 563,150 594,125 624,107 670,98 700,82 729,72 745,75 765,92 790,105 820,122 835,123'],
    [RED, '66,758 100,775 150,795 190,808 230,807 262,800 310,795 380,794 460,796 500,790 540,778 580,772 600,773 625,782 650,788 690,808 720,815 760,835 800,862 820,878 835,882'],
    [TEAL, '66,785 96,795 125,809 140,812 158,822 172,826 188,825 202,815 231,796 260,790 300,788 335,796 352,790 385,798 410,801 445,801 460,792 473,780 503,777 518,766 548,758 563,763 578,772 594,778 609,790 624,795 640,805 655,817 684,830 702,830 729,840 745,850 760,876 790,896 820,912 835,912']]
};

const nq5 = {
  box: [52, 93, 1170, 2767], axis: 1127, floor: 2777, timeY: 2828, seps: [1761, 2266], back: [1089, 154],
  gridH: range(100, 1745, 29.7).concat([1900, 2066, 2235, 2405]), levels: [[1955, '#aaa'], [2739, '#aaa']],
  times: [[126, '04:30'], [276, '05:00'], [427, '05:30'], [577, '06:00'], [727, '06:30'], [877, '07:00'], [1027, '07:30']],
  titles: [[125, 'EMA(NQ 09-22 (5 Minute),9), EMA(NQ 09-22 (5 Minute),21), Bollinger(NQ 09-22 (5 Minute),2.5,14)'], [1795, 'MACD(NQ 09-22 (5 Minute),12,26,9)'], [2300, 'VOL(NQ 09-22 (5 Minute))'], [2735, '© 2022 NinjaTrader, LLC']],
  notes: [[827, 149, 'Entry'], [827, 183, '2 @ 12157.25'], [827, 230, 'Entry'], [827, 265, '1 @ 12163.50'], [827, 314, 'Entry'], [827, 349, '1 @ 12163.75'], [827, 1138, 'Close'], [827, 1173, '2 @ 12164.00'], [827, 1220, 'Target1'], [827, 1255, '1 @ 12152.25'], [827, 1301, 'Close'], [827, 1339, '1 @ 12152.25']],
  labels: [[130, '12190.00'], [203, '12185.00'], [279, '12180.00'], [354, '12175.00'], [430, '12170.00'], [502, '12165.00'], [577, '12160.00'], [651, '12155.00'], [725, '12150.00'], [798, '12145.00'], [1094, '12125.00'], [1169, '12120.00'], [1245, '12115.00'], [1318, '12110.00'], [1393, '12105.00'], [1466, '12100.00'], [1541, '12095.00'], [1614, '12090.00'], [1691, '12085.00'], [1846, '4'], [1957, '0'], [2012, '-2'], [2125, '-6'], [2180, '-8'], [2235, '-10'], [2296, '20000'], [2405, '15000'], [2516, '10000'], [2632, '5000'], [2740, '0']],
  tags: [[408, '12171.21', GOLD, 'dark'], [553, '12161.50', '#000'], [864, '12140.53', AQUA, 'dark'], [951, '12134.74', GOLD, 'dark'], [1038, '12128.75', GOLD, 'dark'], [1668, '12086.29', GOLD, 'dark'], [1788, '6.01', BLUE], [1892, '2.29', TEAL], [2060, '-3.72', RED], [2612, '5731', BLUE]],
  candles: [{ x: 76, s: 25.06, w: 16, v: `640,718,610,740,G 544,648,505,662,G 542,585,540,670,R 580,611,547,642,R 600,654,590,678,R 665,698,620,735,R 625,692,595,702,G 622,702,556,702,R 698,727,662,780,R 718,724,608,748,R 718,724,654,742,G 724,821,680,850,R 823,1105,810,1144,R 1113,1168,1060,1272,R 1177,1358,1170,1400,R 1154,1351,1142,1405,G 1157,1244,1106,1286,R 1165,1252,1160,1338,G 1165,1273,1148,1437,R 1247,1273,1212,1330,G 1073,1252,1040,1280,G 1085,1235,1075,1277,R 1125,1232,1087,1246,G 1130,1171,1080,1240,R 1125,1186,1080,1246,G 1125,1140,1043,1246,R 1110,1131,1000,1288,G 920,1105,607,1620,G 913,1221,648,1410,R 968,1207,920,1580,G 512,957,438,1048,G 425,512,308,588,G 425,553,185,566,R` }],
  bars: [
    { x: 76, s: 25.06, y: 1955, v: [4, 23, 31, 30, 22, 14, 14, 4, -7, -10, -13, -26, -68, -97, -135, -123, -123, -102, -96, -84, -49, -42, -20, -9, 4, 15, 25, 56, 36, 57, 120, 166] },
    { x: 76, s: 25.06, y: 2739, v: [8, 10, 14, 8, 10, 10, 8, 9, 10, 11, 10, 21, 41, 30, 44, 36, 24, 15, 30, 17, 27, 30, 24, 24, 15, 17, 65, 445, 407, 239, 236, 175, 126] }],
  lines: [
    [GOLD, '76,545 100,520 125,500 150,488 175,482 200,485 225,472 250,475 275,475 300,487 325,493 352,505 376,385 402,295 427,203 450,228 477,246 502,290 527,325 552,370 577,455 602,528 628,612 652,715 677,860 702,998 727,1000 752,915 778,940 803,893 828,640 852,410'],
    [GOLD, '76,897 100,912 125,920 150,923 200,923 225,912 250,897 275,900 300,877 325,860 352,846 376,1030 402,1180 427,1380 452,1440 477,1513 502,1552 527,1603 552,1638 577,1614 602,1616 628,1590 652,1548 677,1465 702,1374 728,1370 752,1418 778,1376 803,1396 828,1565 852,1668'],
    [GOLD, '76,718 100,715 125,708 175,703 200,702 225,693 250,690 290,686 330,678 352,675 376,710 402,742 427,792 477,880 527,968 552,1005 577,1035 602,1075 628,1105 652,1133 677,1163 702,1184 728,1185 752,1167 803,1147 828,1095 852,1041'],
    [GOLD, '76,715 100,690 125,684 150,681 200,680 225,677 275,680 325,690 352,703 376,740 402,775 427,828 452,860 477,895 502,920 527,953 552,978 577,985 602,1008 652,1033 702,1050 728,1056 752,1047 778,1060 803,1055 828,1005 852,953'],
    [AQUA, '76,718 100,688 125,668 150,656 175,656 200,664 225,656 250,668 275,680 300,687 325,692 352,725 376,800 402,870 427,967 452,1008 477,1052 502,1075 527,1115 552,1140 577,1129 602,1150 628,1145 652,1148 702,1145 728,1137 752,1096 778,1121 803,1092 828,975 852,866'],
    [CORN, '52,484 1123,793', 2], [CORN, '52,1411 1123,1411', 2],
    [TEAL, '76,398 100,373 125,357 150,348 175,350 200,360 225,354 275,372 300,380 325,385 352,405 376,465 402,518 427,585 477,636 502,645 527,662 552,671 577,648 602,650 628,633 652,624 702,592 728,575 752,531 778,540 803,508 828,410 852,328', 1, 1568],
    [RED, '76,404 100,398 150,380 200,372 225,369 275,369 300,371 325,374 352,380 402,420 427,457 477,518 502,540 527,567 552,587 602,609 652,615 702,610 728,604 752,589 778,581 803,566 828,533 852,494', 1, 1568]],
  extra: '<path d="M827 380V408M820 404h14l-7 20z" stroke="#f0f" stroke-width="2" fill="#f0f"/><path d="M827 1105V1078M820 1082h14l-7-18z" stroke="#1e90ff" stroke-width="2" fill="#1e90ff"/><path d="M820 508v28l8-14zM820 600v28l8-14z" fill="#f0f"/><path d="M834 503v27l-8-13zM834 678v27l-8-13z" fill="#1e90ff"/>'
};

const rg15 = {
  box: [-576, -1452, 1737, 2672], axis: 1051, floor: 1110, timeY: 1176, seps: [], gridH: [-1446, -1380, 1053], levels: [[938, '#aaa']],
  times: [[-506, '00:08'], [-386, '00:45'], [-268, '01:29'], [-149, '02:28'], [-29, '04:06'], [90, '05:16'], [210, '05:56'], [329, '06:30'], [447, '06:33'], [567, '06:37'], [686, '06:41'], [806, '06:46'], [925, '06:51']],
  titles: [[-1411, 'Tick counter(ES 09-22 (15 Range),true,false), EMA(ES 09-22 (15 Range),21), EMA(ES 09-22 (15 Range),9)'], [1060, '© 2022 NinjaTrader, LLC']],
  labels: [[-1380, '3910.00'], [1053, '-2']], tags: [[932, '0.0766', BLUE]],
  bars: [{ x: -124, s: 23.8, y: 938, v: [-24, -33, -48, -70, -70, -55, -42, -44, -55, -70, -95, -117, -122, -129, -117, -110, -88, -66, -55, -37, -23, -12] }, { x: 543, s: 24, y: 938, v: [-16, -12, 0, -5, -15, -34, -34, -25, -18, -10] }],
  lines: [[CORN, '-238,-1363 -165,-1345', 2], [TEAL, '190,935 235,968 258,969 282,961 305,968 330,957 353,950 380,938'], [TEAL, '640,938 662,962 686,972 711,961 737,965 757,952 780,936'], [RED, '670,935 711,944 757,950 800,945 830,936']]
};

const toolIds = ['candles', 'pencil', 'zoomin', 'zoomout', 'plus', 'doc', 'panel', 'bars', 'path', 'clip', 'list'];

function trade(t) {
  return `<form class="trade">
    <div class="grid2">${['Buy Mkt', 'Sell Mkt', 'Buy Ask', 'Sell Ask', 'Buy Bid', 'Sell Bid', 'Rev', 'Close'].map(b => `<button type="button">${b}</button>`).join('')}</div>
    <div class="pos"><b>Flat</b><b>Entry</b><output>$185.00</output></div>
    <div class="pair"><label class="fld">Instrument${pick('Instrument', t.sym, 'disabled')}</label><label class="fld">TIF${pick('TIF', t.tif)}</label></div>
    <div class="pair"><label class="fld">Account${pick('Account', 'kaild7868_si...')}</label><label class="fld">Order qty${qty('Order qty', t.qty)}</label></div>
    <label class="fld">ATM Strategy<span class="with-info"><b>i</b>${pick('ATM Strategy', t.atm, '', 'info')}</span></label>
    <div class="quotes"><p class="quote"><span>A:</span><span>${t.ask}</span><span>${t.askQ}</span></p><p class="quote"><span>B:</span><span>${t.bid}</span><span>${t.bidQ}</span></p></div>
  </form>`;
}

function chartWin(o) {
  return `<section class="win chart-win ${o.cls}">
    <header class="titlebar"><span class="badge">Chart</span>${pick('Instrument', o.sym)}${pick('Interval', o.span)}
      <div class="tools">${toolIds.map(i => `<button aria-label="${i}" class="${i === 'zoomout' ? 'off' : ''}">${use('i-' + (i === 'panel' && !o.trade ? 'panel-line' : i))}</button>`).join('')}</div>
      ${controls(['gray', o.color])}</header>
    <div class="body ${o.trade ? '' : 'solo'}"><div class="plot-col">${plot(o.chart)}
      <div class="hscroll"><i>◂</i><span class="thumb" style="width:${o.thumb}%"></span><i>▸</i></div></div>
      ${o.trade ? trade(o.trade) : ''}</div>
    ${tabs(o.sym)}</section>`;
}

/* ---------- ladders ---------- */
function domWin(o) {
  const rows = o.rows.map(r => `<tr><td>${r[0]}</td><td class="${r[3] || ''}">${r[1]}</td><td>${r[2]}</td></tr>`).join('');
  return `<section class="win ${o.cls}"><header class="titlebar"><span class="badge">SuperDOM</span>${controls([o.color])}</header>
    <div class="dom-panel"><table class="ladder"><thead><tr><th>Buy</th><th>Price</th><th>Sell</th></tr></thead><tbody>${rows}</tbody>${o.foot || ''}</table>
    ${o.cut ? '' : `<div class="acts"><button>Rev</button>${o.short ? '<span class="flat"></span><span></span>' : '<button class="flat">Flat</button><button>Close</button>'}</div>
    <div class="row3"><label class="fld">Instrument${pick('Instrument', 'ES 09-22')}</label><label class="fld">TIF${pick('TIF', 'DAY')}</label><label class="fld">Quantity${qty('Quantity', 1)}</label></div>
    <div class="row2"><label class="fld">Account${pick('Account', 'Sim101')}</label><label class="fld">ATM Strategy<span class="with-info"><b>i</b>${pick('ATM Strategy', 'Single Scalper ES', '', 'info')}</span></label></div>`}
    </div>${o.cut ? '' : tabs('ES 09-22')}</section>`;
}

const sells = { 4: 62, 5: 68, 6: 60, 7: 66, 8: 56, 9: 55, 10: 46, 11: 37, 12: 57, 13: 26 };
const buys = [11, 34, 83, 133, 67, 70, 105, 66, 83, 73];
const esRows = Array.from({ length: 27 }, (_, i) => {
  const p = (3902 - i * .25).toFixed(2);
  return [buys[i - 14] || '', i === 14 ? '(1) ' + p : p, sells[i] || '', i === 14 ? 'hit' : i === 13 ? 'up' : ''];
});
const nqSell = ['', '', '', '', '', '', 5, 5, 3, 3, 4, 2, 6, 2, 2, 2, ''];
const nqRows = nqSell.map((q, i) => { const p = (12165.5 - i * .25).toFixed(2); return ['', i === 15 ? '(1) ' + p : p, q, i === 15 ? 'hit nq' : '']; });
const rgRows = Array.from({ length: 22 }, (_, i) => [buys[i - 11] || '', '', '', '']);

/* ---------- time and sales ---------- */
function tsWin(o) {
  const rows = o.rows.map(r => `<tr class="${r[0]}"><td>...${o.gap}${r[1]}</td><td>${r[2]}</td></tr>`).join('');
  return `<section class="win ${o.cls}"><header class="titlebar"><span class="badge">T &amp; S</span>${controls([o.color])}</header>
    <div class="ts-panel"><table class="ts-top"><tr><th>Bid</th><th>Ask</th></tr><tr><td>${o.p}... <span>${o.bid}</span></td><td>${o.p}... <span>${o.ask}</span></td></tr></table>
    <div class="ts-mid"><table class="tape"><tbody>${rows}</tbody></table><div class="vscroll"><i>▴</i><b></b><i>▾</i></div></div></div>
    ${tabs(o.sym, o.nav)}</section>`;
}
const esTape = ('g1 g1 g1 o1 o1 o1 o2 o5 o1 o1 o1 o1 o1 G3 g4 g1 g5 g1 g1 g1 g1 g... g1 g1 g1 O1 g1 O1 O1 O2 O1 g1 g1 g1 g1 g1 g1 H1 H2 H1 H1 H1 H1 H1 H2 O1 O1 H1 H1').split(' ')
  .map(t => { const k = t[0], q = t.slice(1); return [k === 'G' || k === 'H' ? 'g' : k.toLowerCase(), k === 'G' ? '3899.00' : k === 'O' || k === 'H' ? '3898.50' : '3898.75', q]; });
const nqTape = ('o61.50 p61.50 o61.75 o61.75 o61.75 o61.75 o62.00 g62.25 g62.00 g62.00 o61.50 o61.50 g61.75 g61.50 g61.50 o60.75 o60.75 o60.75 o61.00 o61.00 g61.75 g61.25 g61.25 o61.00 o61.50 o61.75 y62.00 y62.00 g61.75 g61.75 g61.75 g61.75 o61.25 g61.50 g61.50 g61.50 o61.00 o61.00 o61.00 o61.00 o61.50 g62.00 g61.75 g61.75 o61.50 o61.50 o61.75 o61.75 g61.75').split(' ')
  .map(t => [t[0], '121' + t.slice(1), 1]);

/* ---------- control centre ---------- */
function control() {
  const heads = ['Connection', 'Display name', 'Buying power', 'Cash value', 'Excess intraday', 'Excess initial margin', 'Intraday margin', 'Initial margin', 'Net liquidation', 'Gross realized PnL', 'Realized PnL', 'Unrealized PnL', 'Total PnL'];
  const z = '$0.00';
  const data = [
    ['EARN2TRADE', 'Sim101', z, '$97,061.25', '$97,061.25', '$97,061.25', z, z, '$97,061.25', z, z, z, z],
    ['EARN2TRADE', 'kaild7868_sim!', z, '$21,575.20', z, z, z, z, '$21,559.04', '$185.00', '$185.00', z, '$185.00'],
    ['EARN2TRADE', 'kaild7868tcp25', z, '$24,236.10', z, z, z, z, '$24,205.86', '$140.00', '$140.00', z, '$140.00']];
  const menu = [['new', 'New'], ['tools', 'Tools'], ['work', 'Workspaces'], ['plug', 'Connections'], ['help', 'Help']];
  return `<section class="win nt"><header class="nt-bar"><span class="logo">NINJA<b>TRADER</b></span>${menu.map(m => `<button class="menu">${use('n-' + m[0])}${m[1]}</button>`).join('')}${controls([])}</header>
    <div class="nt-main"><table class="accounts"><thead><tr><th class="st"></th>${heads.map(x => `<th><span>${x}</span></th>`).join('')}</tr></thead>
    <tbody>${data.map(r => `<tr><td class="st">${use('i-dot')}</td>${r.map(v => `<td class="${/^\$1[48]/.test(v) ? 'up' : ''}"><span>${v}</span></td>`).join('')}</tr>`).join('')}</tbody></table></div>
    <nav class="nt-tabs">${use('i-dot')}<button class="w64">Orders</button><button class="w75">Strategies</button><button class="w68">Positions</button><button class="on w70">Accounts</button><button class="w64">Log</button><button class="w80">Executions</button><button class="plus" aria-label="Add tab">+</button></nav></section>`;
}

const wall = `<svg class="wall" viewBox="0 0 1365 734" preserveAspectRatio="none" aria-hidden="true">
  <path class="soft" d="M0 110Q120 115 200 160T420 320M0 158Q100 168 190 168"/>
  <path class="soft" d="M420 115L560 38M420 42L560 143M420 190L620 330"/><path d="M400 126L560 36"/></svg>`;

const esTrade = { sym: 'ES 09-22', tif: 'DAY', qty: 1, atm: 'Single Scalper ES', ask: '3898.75', askQ: 26, bid: '3898.50', bidQ: 11 };
document.getElementById('ws1').innerHTML = wall +
  chartWin({ cls: 'es15', sym: 'ES 09-22', span: '15 Minute', color: 'orange', chart: es15, thumb: 17 }) +
  domWin({ cls: 'es-dom', color: 'orange', rows: esRows, foot: '<tfoot><tr><td>Market</td><td class="loss">$0.00</td><td>Market</td><td class="center">C</td></tr></tfoot>' }) +
  tsWin({ cls: 'es-ts', color: 'orange', sym: 'ES 09-22', p: 3, bid: 34, ask: 12, gap: '', rows: esTape, nav: true }) +
  chartWin({ cls: 'es5', sym: 'ES 09-22', span: '5 Minute', color: 'orange', chart: es5, thumb: 8, trade: esTrade });

const shortcut = (icon, text, chk) => `<a href="#">${use('t-' + icon)}${chk ? use('t-check', 'chk') : ''}<span>${text}</span></a>`;
document.getElementById('ws2').innerHTML = wall +
  `<nav class="shortcuts">${shortcut('bin', 'Recycle Bin')}${shortcut('edge', 'Microsoft<br>Edge', 1)}${shortcut('excel', 'NinjaTrader<br>Grid 2022...', 1)}${shortcut('ib', 'Trader<br>Workstation', 1)}${shortcut('chrome', '')}</nav>` +
  domWin({ cls: 'nq-dom', color: 'red', rows: nqRows, cut: true }) +
  tsWin({ cls: 'nq-ts', color: 'red', sym: 'NQ 09-22', p: 12, bid: 2, ask: 2, gap: ' ', rows: nqTape }) +
  chartWin({ cls: 'nq15', sym: 'NQ 09-22', span: '15 Minute', color: 'red', chart: nq15, thumb: 20 }) +
  chartWin({ cls: 'nq5', sym: 'NQ 09-22', span: '5 Minute', color: 'red', chart: nq5, thumb: 4, trade: { sym: 'NQ 09-22', tif: 'GTC', qty: 2, atm: 'NQ Long scalp', ask: '12161.75', askQ: 1, bid: '12161.25', bidQ: 2 } });

document.getElementById('ws3').innerHTML = wall +
  domWin({ cls: 'rg-dom', color: 'orange', rows: rgRows, short: true, foot: `<tfoot>${['Ask', 'Bid', 'Market'].map(t => `<tr><td>${t}</td><td></td><td></td></tr>`).join('')}</tfoot>` }) +
  chartWin({ cls: 'rg-chart', sym: 'ES 09-22', span: '15 Range', color: 'orange', chart: rg15, thumb: 16, trade: { ...esTrade, askQ: 12, bidQ: 34 } }) +
  control();

const apps = ['start', 'search', 'task', 'chat', 'folder', 'edge', 'store', 'dell', 'alexa', 'mcafee', 'ib', 'nt', 'chrome', 'deck'];
[1, 2, 3].forEach(n => {
  document.getElementById('tb' + n).innerHTML = `<div class="weather">${use('t-sun')}<span>62°F<small>Sunny</small></span></div>
    <nav class="apps">${apps.map(a => `<button aria-label="${a}" class="${a === 'nt' ? 'on' : a === 'folder' ? 'run' : ''}">${use('t-' + a)}</button>`).join('')}</nav>
    <div class="tray ${n === 2 ? 'has-count' : ''}">${n === 2 ? ['up', 'cloud', 'sync', 'wifi', 'sound', 'batt'].map(i => use('y-' + i)).join('') : ''}
    <div class="clock">6:58 AM<br>7/18/2022</div>${n === 2 ? '<span class="count">1</span>' : ''}</div>`;
});
```
